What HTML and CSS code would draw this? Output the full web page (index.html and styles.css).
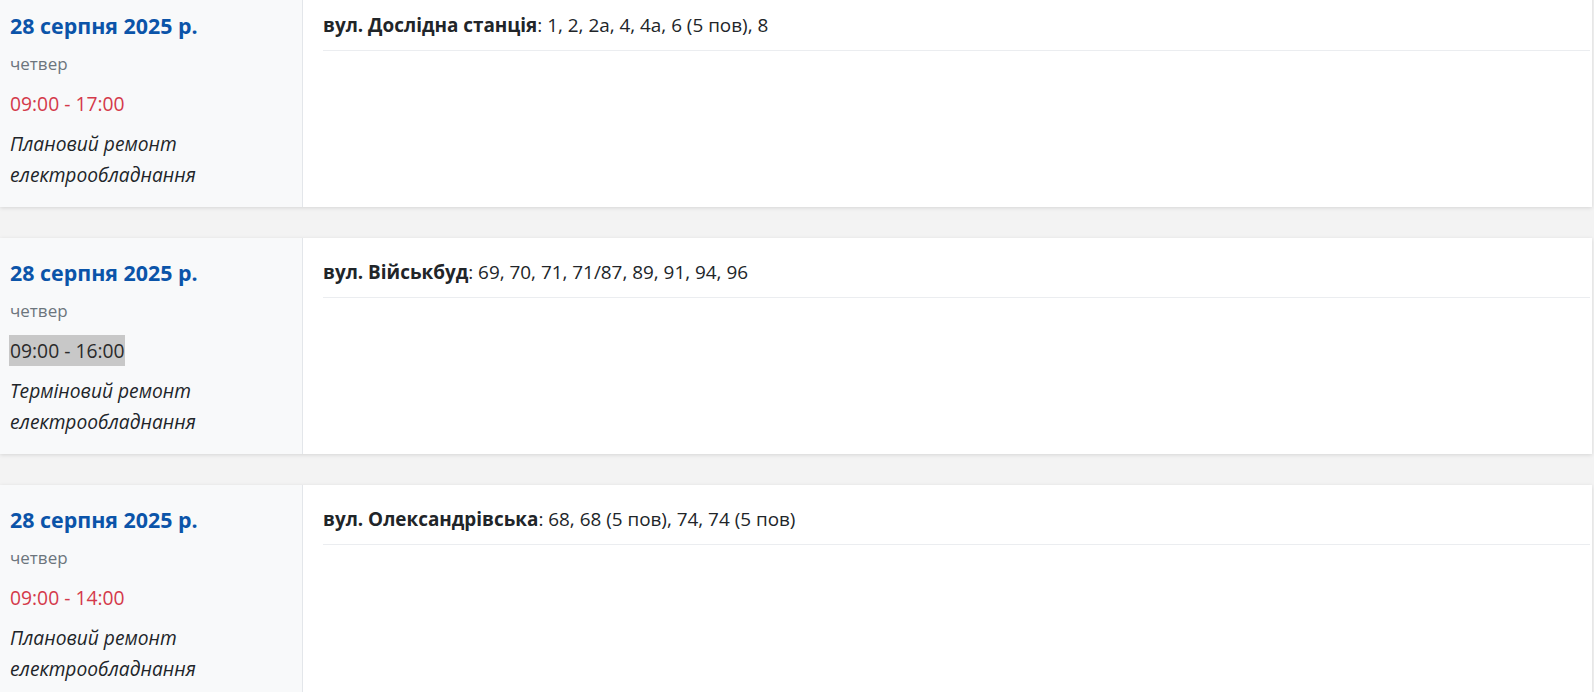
FILE: index.html
```html
<!DOCTYPE html>
<html lang="uk">
<head>
<meta charset="utf-8">
<title>Відключення</title>
<link rel="stylesheet" href="styles.css">
</head>
<body>
<div class="list">
  <div class="card">
    <div class="card-side">
      <div class="date">28 серпня 2025 р.</div>
      <div class="weekday">четвер</div>
      <div class="time"><span class="time-text">09:00 - 17:00</span></div>
      <div class="reason">Плановий ремонт електрообладнання</div>
    </div>
    <div class="card-main">
      <div class="addr"><b>вул. Дослідна станція</b>: 1, 2, 2а, 4, 4а, 6 (5 пов), 8</div>
    </div>
  </div>
  <div class="card">
    <div class="card-side">
      <div class="date">28 серпня 2025 р.</div>
      <div class="weekday">четвер</div>
      <div class="time"><span class="time-text selected">09:00 - 16:00</span></div>
      <div class="reason">Терміновий ремонт електрообладнання</div>
    </div>
    <div class="card-main">
      <div class="addr"><b>вул. Військбуд</b>: 69, 70, 71, 71/87, 89, 91, 94, 96</div>
    </div>
  </div>
  <div class="card">
    <div class="card-side">
      <div class="date">28 серпня 2025 р.</div>
      <div class="weekday">четвер</div>
      <div class="time"><span class="time-text">09:00 - 14:00</span></div>
      <div class="reason">Плановий ремонт електрообладнання</div>
    </div>
    <div class="card-main">
      <div class="addr"><b>вул. Олександрівська</b>: 68, 68 (5 пов), 74, 74 (5 пов)</div>
    </div>
  </div>
</div>
</body>
</html>
```

FILE: styles.css
```css
* { box-sizing: border-box; }
html, body {
  margin: 0;
  padding: 0;
  background: #f3f3f3;
  font-family: "Open Sans", "Noto Sans", sans-serif;
  color: #212529;
  overflow: hidden;
}
.list {
  margin-top: -9px;
  padding-right: 2px;
  display: flex;
  flex-direction: column;
  gap: 31px;
}
.card {
  display: flex;
  background: #fff;
  box-shadow: 0 1px 4px rgba(0,0,0,0.12);
  min-height: 216px;
}
.card-side {
  flex: 0 0 303px;
  background: #f8f9fa;
  border-right: 1px solid #e3e6ea;
  padding: 20px 10px 17px;
}
.date {
  font-size: 21.4px;
  font-weight: 700;
  line-height: 30px;
  color: #0b54a9;
  margin-bottom: 11px;
}
.weekday {
  font-size: 17px;
  line-height: 24px;
  color: #6c757d;
  margin-bottom: 13px;
}
.time {
  font-size: 19.3px;
  line-height: 30px;
  font-weight: 500;
  color: #d4394a;
  margin-bottom: 10px;
}
.time-text.selected {
  background: #c8c8c8;
  color: #2b2b2b;
  padding: 2px 0 2px 1px;
  margin-left: -1px;
}
.reason {
  font-size: 19.2px;
  font-style: italic;
  line-height: 30.5px;
  color: #212529;
}
.card-main {
  flex: 1;
  padding: 21px 2px 20px 20px;
}
.addr {
  font-size: 18.9px;
  line-height: 27px;
  padding-bottom: 11px;
  border-bottom: 1px solid #ebedf0;
}
.addr b { font-weight: 700; }
```
